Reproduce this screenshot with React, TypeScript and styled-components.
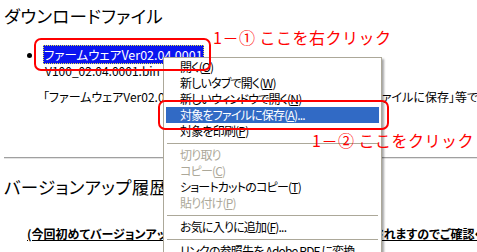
import React from "react";
import styled, { createGlobalStyle } from "styled-components";

const Global = createGlobalStyle`
  html, body { margin: 0; padding: 0; overflow: hidden; background: #fff; }
  body {
    font-family: "Noto Sans CJK JP", "Liberation Sans", sans-serif;
    font-feature-settings: "palt";
    color: #000;
  }
`;

const Page = styled.div`
  position: relative;
  width: 477px;
  height: 252px;
  overflow: hidden;
  padding-left: 4px;
  box-sizing: border-box;
  display: flex;
  flex-direction: column;
  align-items: flex-start;
`;

const Heading = styled.h2<{ $top: number }>`
  margin: ${(p) => p.$top}px 0 0;
  font-size: 17.5px;
  line-height: 20px;
  font-weight: normal;
  letter-spacing: 0.3px;
`;

const List = styled.ul`
  margin: 21px 0 0;
  padding-left: 39px;
  font-size: 12px;
  line-height: 16px;
`;

const Item = styled.li`
  list-style: disc;
`;

const SelectedLink = styled.span`
  background: #0a14f0;
  color: #fff;
  outline: 1px dotted #e8e840;
  outline-offset: -1px;
  padding: 0 1px;
  font-size: 12.5px;
`;

const FileName = styled.div`
  padding-left: 2px;
`;

const Para = styled.p`
  margin: 10px 0 0 39px;
  font-size: 12px;
  line-height: 16px;
  white-space: nowrap;
`;

const Rule = styled.hr`
  align-self: stretch;
  margin: 52px 0 0;
  border: none;
  border-top: 1px solid #a0a0a0;
  border-bottom: 1px solid #e4e4e4;
  height: 0;
`;

const Note = styled.p`
  margin: 29px 0 0 23px;
  font-size: 12px;
  line-height: 16px;
  font-weight: bold;
  text-decoration: underline;
  white-space: nowrap;
`;

const Menu = styled.div`
  position: absolute;
  left: 163px;
  top: 57px;
  width: 219px;
  box-sizing: border-box;
  border: 1px solid #aca899;
  background: #fff;
  padding: 1px 2px;
  box-shadow: 2px 2px 2px rgba(0, 0, 0, 0.35);
  font-size: 12px;
  letter-spacing: -0.8px;
  display: flex;
  flex-direction: column;
`;

const MenuItem = styled.div<{ $active?: boolean; $disabled?: boolean }>`
  height: 16px;
  line-height: 16px;
  padding-left: 14px;
  white-space: nowrap;
  background: ${(p) => (p.$active ? "#316ac5" : "transparent")};
  color: ${(p) => (p.$active ? "#fff" : p.$disabled ? "#aca899" : "#000")};
`;

const Separator = styled.div`
  height: 8px;
  display: flex;
  align-items: center;
  &::before {
    content: "";
    flex: 1;
    height: 1px;
    background: #aca899;
    margin: 0 1px;
  }
`;

const RedBox = styled.div<{ $l: number; $t: number; $w: number; $h: number }>`
  position: absolute;
  left: ${(p) => p.$l}px;
  top: ${(p) => p.$t}px;
  width: ${(p) => p.$w}px;
  height: ${(p) => p.$h}px;
  box-sizing: border-box;
  border: 2px solid #ff0000;
  border-radius: 7px;
`;

const RedLabel = styled.div<{ $l: number; $t: number }>`
  position: absolute;
  left: ${(p) => p.$l}px;
  top: ${(p) => p.$t}px;
  color: #ff0000;
  font-size: 16px;
  line-height: 18px;
  letter-spacing: 0.5px;
  white-space: nowrap;
  font-feature-settings: normal;
`;

type Entry =
  | { sep: true }
  | { sep?: false; text: string; key?: string; tail?: string; active?: boolean; disabled?: boolean };

const items: Entry[] = [
  { text: "開く(", key: "O", tail: ")" },
  { text: "新しいタブで開く(", key: "W", tail: ")" },
  { text: "新しいウィンドウで開く(", key: "N", tail: ")" },
  { text: "対象をファイルに保存(", key: "A", tail: ")...", active: true },
  { text: "対象を印刷(", key: "P", tail: ")" },
  { sep: true },
  { text: "切り取り", disabled: true },
  { text: "コピー(", key: "C", tail: ")", disabled: true },
  { text: "ショートカットのコピー(", key: "T", tail: ")" },
  { text: "貼り付け(", key: "P", tail: ")", disabled: true },
  { sep: true },
  { text: "お気に入りに追加(", key: "F", tail: ")..." },
  { sep: true },
  { text: "リンクの参照先を Adobe PDF に変換" },
];

export default function App() {
  return (
    <Page>
      <Global />
      <Heading $top={6}>ダウンロードファイル</Heading>
      <List>
        <Item>
          <SelectedLink>ファームウェアVer02.04.0001</SelectedLink>
          <FileName>V100_02.04.0001.bin</FileName>
        </Item>
      </List>
      <Para>「ファームウェアVer02.04.0001」をマウスで右クリックし、「対象をファイルに保存」等で保存してください。</Para>
      <Rule />
      <Heading $top={18}>バージョンアップ履歴</Heading>
      <Note>(今回初めてバージョンアップされる方は、更新時の手順が一部変更されますのでご確認ください)</Note>

      <Menu>
        {items.map((it, i) =>
          it.sep ? (
            <Separator key={i} />
          ) : (
            <MenuItem key={i} $active={it.active} $disabled={it.disabled}>
              {it.text}
              {it.key && <u>{it.key}</u>}
              {it.tail}
            </MenuItem>
          )
        )}
      </Menu>

      <RedBox $l={34} $t={38} $w={177} $h={33} />
      <RedBox $l={158} $t={100} $w={231} $h={30} />
      <RedLabel $l={213} $t={28}>1－① ここを右クリック</RedLabel>
      <RedLabel $l={312} $t={131}>1－② ここをクリック</RedLabel>
    </Page>
  );
}
